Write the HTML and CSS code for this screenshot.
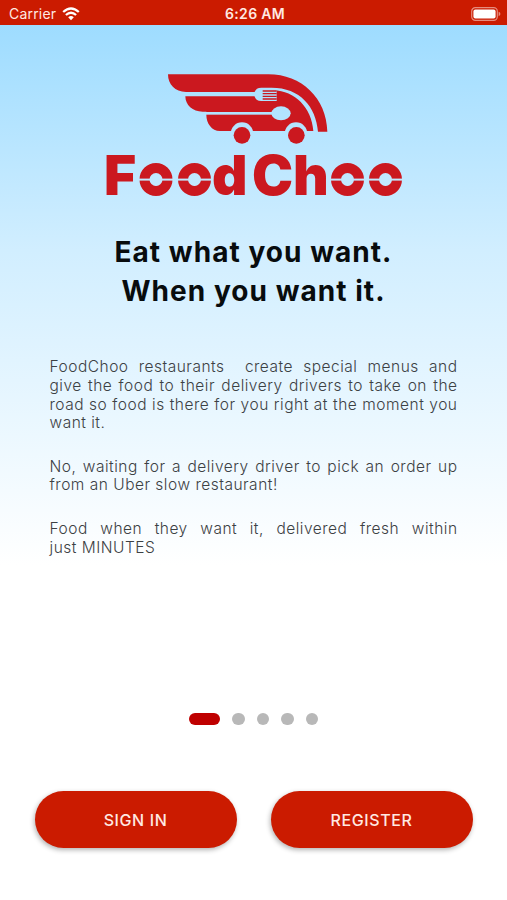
FILE: index.html
```html
<!DOCTYPE html>
<html lang="en">
<head>
    <meta charset="UTF-8">
    <meta name="viewport" content="width=device-width, initial-scale=1.0">
    <title>FoodChoo</title>
    <link rel="stylesheet" href="styles.css">
</head>
<body>
    <header class="status-bar">
        <div class="carrier">
            <span>Carrier</span>
            <svg class="wifi" viewBox="0 0 18 14">
                <path d="M1.2 5 Q9 -2 16.8 5" />
                <path d="M3.9 8 Q9 3.5 14.1 8" />
                <path class="wifi-dot" d="M6.2 10.2 Q9 7.8 11.8 10.2 L9 13.2 Z" />
            </svg>
        </div>
        <div class="time">6:26 AM</div>
        <div class="power">
            <svg class="battery" viewBox="0 0 30 14">
                <rect class="battery-case" x="0.7" y="0.7" width="25.6" height="12.6" rx="3.6" />
                <rect class="battery-level" x="2.4" y="2.4" width="22.2" height="9.2" rx="2" />
                <path class="battery-tip" d="M27.6 4.8 Q29.4 5.4 29.4 7 Q29.4 8.6 27.6 9.2 Z" />
            </svg>
        </div>
    </header>
    <main class="welcome">
        <div class="logo">
            <svg class="logo-truck" viewBox="0 0 525 255">
                <mask id="cutouts">
                    <rect class="keep" width="525" height="255" />
                    <rect x="120" y="141" width="225" height="8" />
                    <ellipse cx="363" cy="145" rx="29" ry="21" />
                    <path d="M350 68 V108 H304 Q286 108 284 94 V81 Q288 68 304 68 Z" />
                    <circle cx="246" cy="206" r="34" />
                    <circle cx="408" cy="206" r="34" />
                </mask>
                <path d="M24 28 H325 C425 28 500 100 502 200 H474 C468 125 420 68 335 68 H304 Q288 68 284 81 H78 C45 81 24 58 24 28 Z" />
                <path mask="url(#cutouts)" d="M76 94 H340 V76 C405 78 455 128 460 198 H180 C155 198 139 175 139 150 V140 H128 C98 140 76 120 76 94 Z" />
                <path d="M308 76 H350 V80 H308 Z M308 84 H350 V88 H308 Z M308 92 H350 V96 H308 Z M308 100 H350 V104 H308 Z" />
                <circle cx="246" cy="211" r="25" />
                <circle cx="409" cy="211" r="25" />
            </svg>
            <svg class="logo-name" viewBox="0 0 300 46">
                <mask id="wheels" maskUnits="userSpaceOnUse" x="-5" y="-5" width="310" height="60">
                    <rect class="keep" x="-5" y="-5" width="310" height="60" />
                    <rect x="32" y="28.6" width="75" height="2" />
                    <rect x="223" y="28.6" width="76" height="2" />
                    <circle cx="50" cy="29.5" r="6.5" />
                    <circle cx="88.5" cy="29.5" r="6.5" />
                    <circle cx="241.5" cy="29.5" r="6.5" />
                    <circle cx="279.5" cy="29.5" r="6.5" />
                </mask>
                <g mask="url(#wheels)">
                    <circle class="ring" cx="50" cy="29.5" r="11.2" />
                    <circle class="ring" cx="88.5" cy="29.5" r="11.2" />
                    <circle class="ring" cx="241.5" cy="29.5" r="11.2" />
                    <circle class="ring" cx="279.5" cy="29.5" r="11.2" />
                    <text y="45" x="-2 36 74.5 106 146 187 227.5 265.5">F<tspan class="oo">oo</tspan>dCh<tspan class="oo">oo</tspan></text>
                </g>
            </svg>
        </div>
        <h1>Eat what you want.<br>When you want it.</h1>
        <div class="intro">
            <p>
                <span class="full">FoodChoo restaurants &nbsp;create special menus and</span>
                <span class="full">give the food to their delivery drivers to take on the</span>
                <span class="full">road so food is there for you right at the moment you</span>
                <span>want it.</span>
            </p>
            <p>
                <span class="full">No, waiting for a delivery driver to pick an order up</span>
                <span>from an Uber slow restaurant!</span>
            </p>
            <p>
                <span class="full">Food when they want it, delivered fresh within</span>
                <span>just MINUTES</span>
            </p>
        </div>
        <div class="dots">
            <span class="dot active"></span>
            <span class="dot"></span>
            <span class="dot"></span>
            <span class="dot"></span>
            <span class="dot"></span>
        </div>
        <div class="buttons">
            <button type="button">SIGN IN</button>
            <button type="button">REGISTER</button>
        </div>
    </main>
</body>
</html>
```
FILE: styles.css
```css
* {
    box-sizing: border-box;
}
body {
    margin: 0;
    height: 900px;
    overflow: hidden;
    font-family: Inter, "Open Sans", sans-serif;
    background-color: #fff;
}

/* Status bar */
.status-bar {
    display: flex;
    align-items: center;
    height: 25px;
    padding: 2px 6px 0 9px;
    background-color: #cb1b00;
    color: #ffe9e2;
    font-size: 14px;
}
.carrier,
.power {
    display: flex;
    flex: 1;
    align-items: center;
    gap: 6px;
}
.power {
    justify-content: flex-end;
}
.carrier {
    letter-spacing: 0.2px;
}
.time {
    font-weight: 600;
    letter-spacing: 0.3px;
}
.wifi {
    width: 18px;
    height: 14px;
    fill: none;
    stroke: #fff;
    stroke-width: 2.3;
}
.wifi .wifi-dot {
    fill: #fff;
    stroke: none;
}
.battery {
    width: 30px;
    height: 14px;
}
.battery-case {
    fill: none;
    stroke: #e58d7f;
    stroke-width: 1.2;
}
.battery-level {
    fill: #fff;
}
.battery-tip {
    fill: #e58d7f;
}

/* Welcome screen */
.welcome {
    display: flex;
    flex-direction: column;
    align-items: center;
    height: 875px;
    padding-top: 40px;
    background: linear-gradient(#9edcff 0, #d1eeff 225px, #fff 540px);
}
.logo {
    display: flex;
    flex-direction: column;
    width: 300px;
    fill: #cb181f;
}
.logo mask {
    fill: #000;
}
.logo mask .keep {
    fill: #fff;
}
.logo-truck {
    width: 175px;
    height: 85px;
    margin-left: 56px;
}
.logo-name {
    width: 300px;
    height: 46px;
    margin-left: 2px;
    overflow: visible;
    font-size: 55px;
    font-weight: 900;
}
.logo-name .oo {
    font-size: 46px;
}
.logo-name .ring {
    fill: none;
    stroke: #cb181f;
    stroke-width: 10.6;
}
h1 {
    margin: 37px 0 0;
    font-size: 28px;
    line-height: 39px;
    font-weight: 700;
    letter-spacing: 1.05px;
    text-align: center;
    color: #080c0e;
}
.intro {
    width: 408px;
    margin-top: 47px;
    font-size: 15.5px;
    font-weight: 300;
    line-height: 18.8px;
    letter-spacing: 0.5px;
    color: #3c4144;
}
.intro p {
    margin: 0 0 24.5px;
}
.intro span {
    display: block;
    white-space: nowrap;
}
.intro .full {
    text-align: justify;
    text-align-last: justify;
}

/* Page dots */
.dots {
    display: flex;
    gap: 12px;
    margin-top: 131px;
}
.dot {
    width: 12.5px;
    height: 12.5px;
    border-radius: 50%;
    background-color: #b8b8b8;
}
.dot.active {
    width: 31px;
    border-radius: 7px;
    background-color: #bf0000;
}

.buttons {
    display: flex;
    gap: 34px;
    margin-top: 66px;
}
.buttons button {
    width: 202px;
    height: 57px;
    padding: 0;
    border: none;
    border-radius: 29px;
    background-color: #cb1b00;
    box-shadow: -1px 2px 5px rgba(0, 0, 0, 0.3);
    color: #ffe9e2;
    font-family: inherit;
    font-size: 16px;
    font-weight: 500;
    letter-spacing: 0.6px;
}
```
